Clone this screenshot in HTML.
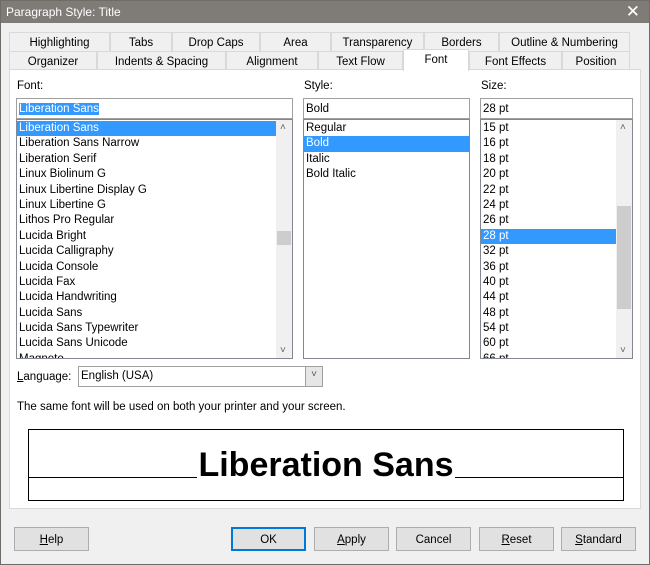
<!DOCTYPE html>
<html><head><style>
*{box-sizing:border-box;margin:0;padding:0}
body{width:650px;height:565px;background:#f0f0f0;font-family:"Liberation Sans",sans-serif;font-size:11.5px;color:#000;position:relative;overflow:hidden}
.a{position:absolute}
#win{left:0;top:0;width:650px;height:565px;border:1px solid #6f6b67}
#title{left:0;top:0;width:650px;height:23px;background:#7f7b77;color:#fff;font-size:12px;padding:5px 0 0 6px}
.tab{position:absolute;height:19px;border:1px solid #d9d9d9;border-bottom:none;background:#f0f0f0;text-align:center;padding-top:4px;font-size:11.5px}
#panel{left:9px;top:69px;width:632px;height:440px;background:#fff;border:1px solid #d9d9d9}
.in{position:absolute;border:1px solid #a0a0a0;background:#fff;padding:3px 2px;height:21px}
.lst{position:absolute;border:1px solid #828790;background:#fff;overflow:hidden;padding-top:1px}
.it{height:15.4px;line-height:15.4px;padding-left:2px;white-space:nowrap}
.sel{background:#3399ff;color:#fff}
.sb{position:absolute;top:0;right:0;width:16px;bottom:0;background:#f0f0f0}
.btn{position:absolute;top:527px;width:75px;height:24px;border:1px solid #adadad;background:#e1e1e1;text-align:center;padding-top:6px;font-size:11.5px}
.lbl{position:absolute;font-size:11.5px}
</style></head><body>
<div class="a" id="title">Paragraph Style: Title</div>
<div class="a" style="right:10px;top:2px;color:#fff;font-size:17px">✕</div>
<div class="tab" style="left:9px;top:32px;width:101px">Highlighting</div>
<div class="tab" style="left:110px;top:32px;width:62px">Tabs</div>
<div class="tab" style="left:172px;top:32px;width:88px">Drop Caps</div>
<div class="tab" style="left:260px;top:32px;width:71px">Area</div>
<div class="tab" style="left:331px;top:32px;width:93px">Transparency</div>
<div class="tab" style="left:424px;top:32px;width:75px">Borders</div>
<div class="tab" style="left:499px;top:32px;width:131px">Outline &amp; Numbering</div>
<div class="tab" style="left:9px;top:51px;width:88px;height:18px">Organizer</div>
<div class="tab" style="left:97px;top:51px;width:129px;height:18px">Indents &amp; Spacing</div>
<div class="tab" style="left:226px;top:51px;width:92px;height:18px">Alignment</div>
<div class="tab" style="left:318px;top:51px;width:85px;height:18px">Text Flow</div>
<div class="tab" style="left:469px;top:51px;width:93px;height:18px">Font Effects</div>
<div class="tab" style="left:562px;top:51px;width:68px;height:18px">Position</div>
<div class="a" id="panel"></div>
<div class="tab" style="left:403px;top:49px;width:66px;height:22px;background:#fff;border-color:#d9d9d9;z-index:2">Font</div>

<div class="lbl" style="left:17px;top:80px">Font:</div>
<div class="lbl" style="left:304px;top:80px">Style:</div>
<div class="lbl" style="left:481px;top:80px">Size:</div>
<div class="in" style="left:16px;top:98px;width:277px;padding-top:4px"><span style="background:#3399ff;color:#fff">Liberation Sans</span></div>
<div class="in" style="left:303px;top:98px;width:167px;padding-top:4px">Bold</div>
<div class="in" style="left:480px;top:98px;width:153px;padding-top:4px">28 pt</div>

<div class="lst" style="left:16px;top:119px;width:277px;height:240px">
<div class="it sel" style="margin-right:16px">Liberation Sans</div>
<div class="it">Liberation Sans Narrow</div><div class="it">Liberation Serif</div><div class="it">Linux Biolinum G</div><div class="it">Linux Libertine Display G</div><div class="it">Linux Libertine G</div><div class="it">Lithos Pro Regular</div><div class="it">Lucida Bright</div><div class="it">Lucida Calligraphy</div><div class="it">Lucida Console</div><div class="it">Lucida Fax</div><div class="it">Lucida Handwriting</div><div class="it">Lucida Sans</div><div class="it">Lucida Sans Typewriter</div><div class="it">Lucida Sans Unicode</div><div class="it">Magneto</div>
<div class="sb"><div class="a" style="left:4px;top:2px;font-size:10px;color:#606060">˄</div><div class="a" style="left:1px;top:111px;width:14px;height:14px;background:#cdcdcd"></div><div class="a" style="left:4px;bottom:2px;font-size:10px;color:#606060">˅</div></div>
</div>
<div class="lst" style="left:303px;top:119px;width:167px;height:240px">
<div class="it">Regular</div><div class="it sel">Bold</div><div class="it">Italic</div><div class="it">Bold Italic</div>
</div>
<div class="lst" style="left:480px;top:119px;width:153px;height:240px">
<div class="it">15 pt</div><div class="it">16 pt</div><div class="it">18 pt</div><div class="it">20 pt</div><div class="it">22 pt</div><div class="it">24 pt</div><div class="it">26 pt</div><div class="it sel" style="margin-right:16px">28 pt</div><div class="it">32 pt</div><div class="it">36 pt</div><div class="it">40 pt</div><div class="it">44 pt</div><div class="it">48 pt</div><div class="it">54 pt</div><div class="it">60 pt</div><div class="it">66 pt</div>
<div class="sb"><div class="a" style="left:4px;top:2px;font-size:10px;color:#606060">˄</div><div class="a" style="left:1px;top:86px;width:14px;height:103px;background:#cdcdcd"></div><div class="a" style="left:4px;bottom:2px;font-size:10px;color:#606060">˅</div></div>
</div>

<div class="lbl" style="left:17px;top:371px"><u>L</u>anguage:</div>
<div class="in" style="left:78px;top:366px;width:245px;height:21px">English (USA)<div class="a" style="right:0;top:0;width:17px;height:19px;background:#e6e6e6;border-left:1px solid #a0a0a0;text-align:center;font-size:10px;color:#555;padding-top:2px">˅</div></div>
<div class="lbl" style="left:17px;top:401px">The same font will be used on both your printer and your screen.</div>

<div class="a" style="left:28px;top:429px;width:596px;height:72px;border:1px solid #000;overflow:hidden">
<div class="a" style="left:0;right:0;top:47px;border-top:1px solid #000"></div>
<div class="a" style="left:0;right:0;top:17px;text-align:center"><span style="background:#fff;font-weight:bold;font-size:34px;line-height:36px;padding:0 1px">Liberation Sans</span></div>
</div>

<div class="btn" style="left:14px"><u>H</u>elp</div>
<div class="btn" style="left:231px;border:2px solid #0078d7;padding-top:5px">OK</div>
<div class="btn" style="left:314px"><u>A</u>pply</div>
<div class="btn" style="left:396px">Cancel</div>
<div class="btn" style="left:479px"><u>R</u>eset</div>
<div class="btn" style="left:561px"><u>S</u>tandard</div>
<div class="a" id="win"></div>
</body></html>
